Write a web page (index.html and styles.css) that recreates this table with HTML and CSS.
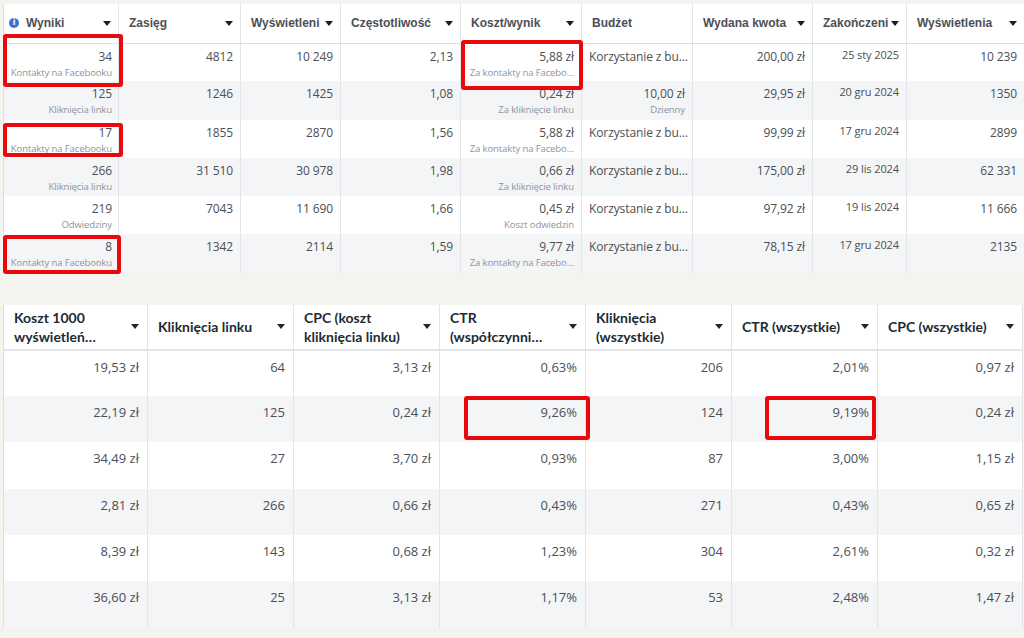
FILE: index.html
```html
<!DOCTYPE html>
<html lang="pl">
<head>
<meta charset="utf-8">
<title>Wyniki kampanii</title>
<link rel="stylesheet" href="styles.css">
</head>
<body>
<div class="page">
  <table class="grid top">
    <colgroup>
      <col class="t1"><col class="t2"><col class="t3"><col class="t4"><col class="t5"><col class="t6"><col class="t7"><col class="t8"><col class="t9">
    </colgroup>
    <thead>
      <tr>
        <th><div class="hd"><span class="info">i</span><span class="lbl">Wyniki</span><span class="caret"></span></div></th>
        <th><div class="hd"><span class="lbl">Zasięg</span><span class="caret"></span></div></th>
        <th><div class="hd"><span class="lbl">Wyświetleni</span><span class="caret"></span></div></th>
        <th><div class="hd"><span class="lbl">Częstotliwość</span><span class="caret"></span></div></th>
        <th><div class="hd"><span class="lbl">Koszt/wynik</span><span class="caret"></span></div></th>
        <th><div class="hd"><span class="lbl">Budżet</span></div></th>
        <th><div class="hd"><span class="lbl">Wydana kwota</span><span class="caret"></span></div></th>
        <th><div class="hd"><span class="lbl">Zakończeni</span><span class="caret"></span></div></th>
        <th><div class="hd"><span class="lbl">Wyświetlenia</span><span class="caret"></span></div></th>
      </tr>
    </thead>
    <tbody>
      <tr>
        <td class="num first mk"><div class="v">34</div><div class="sub">Kontakty na Facebooku</div><span class="mark m1"></span></td>
        <td class="num"><div class="v">4812</div></td>
        <td class="num"><div class="v">10 249</div></td>
        <td class="num"><div class="v">2,13</div></td>
        <td class="num mk"><div class="v">5,88 zł</div><div class="sub">Za kontakty na Facebo…</div><span class="mark m4"></span></td>
        <td class="txt"><div class="v">Korzystanie z bu…</div></td>
        <td class="num"><div class="v">200,00 zł</div></td>
        <td class="date"><div class="v">25 sty 2025</div></td>
        <td class="num"><div class="v">10 239</div></td>
      </tr>
      <tr>
        <td class="num first"><div class="v">125</div><div class="sub">Kliknięcia linku</div></td>
        <td class="num"><div class="v">1246</div></td>
        <td class="num"><div class="v">1425</div></td>
        <td class="num"><div class="v">1,08</div></td>
        <td class="num"><div class="v">0,24 zł</div><div class="sub">Za kliknięcie linku</div></td>
        <td class="num"><div class="v">10,00 zł</div><div class="sub">Dzienny</div></td>
        <td class="num"><div class="v">29,95 zł</div></td>
        <td class="date"><div class="v">20 gru 2024</div></td>
        <td class="num"><div class="v">1350</div></td>
      </tr>
      <tr>
        <td class="num first mk"><div class="v">17</div><div class="sub">Kontakty na Facebooku</div><span class="mark m2"></span></td>
        <td class="num"><div class="v">1855</div></td>
        <td class="num"><div class="v">2870</div></td>
        <td class="num"><div class="v">1,56</div></td>
        <td class="num"><div class="v">5,88 zł</div><div class="sub">Za kontakty na Facebo…</div></td>
        <td class="txt"><div class="v">Korzystanie z bu…</div></td>
        <td class="num"><div class="v">99,99 zł</div></td>
        <td class="date"><div class="v">17 gru 2024</div></td>
        <td class="num"><div class="v">2899</div></td>
      </tr>
      <tr>
        <td class="num first"><div class="v">266</div><div class="sub">Kliknięcia linku</div></td>
        <td class="num"><div class="v">31 510</div></td>
        <td class="num"><div class="v">30 978</div></td>
        <td class="num"><div class="v">1,98</div></td>
        <td class="num"><div class="v">0,66 zł</div><div class="sub">Za kliknięcie linku</div></td>
        <td class="txt"><div class="v">Korzystanie z bu…</div></td>
        <td class="num"><div class="v">175,00 zł</div></td>
        <td class="date"><div class="v">29 lis 2024</div></td>
        <td class="num"><div class="v">62 331</div></td>
      </tr>
      <tr>
        <td class="num first"><div class="v">219</div><div class="sub">Odwiedziny</div></td>
        <td class="num"><div class="v">7043</div></td>
        <td class="num"><div class="v">11 690</div></td>
        <td class="num"><div class="v">1,66</div></td>
        <td class="num"><div class="v">0,45 zł</div><div class="sub">Koszt odwiedzin</div></td>
        <td class="txt"><div class="v">Korzystanie z bu…</div></td>
        <td class="num"><div class="v">97,92 zł</div></td>
        <td class="date"><div class="v">19 lis 2024</div></td>
        <td class="num"><div class="v">11 666</div></td>
      </tr>
      <tr>
        <td class="num first mk"><div class="v">8</div><div class="sub">Kontakty na Facebooku</div><span class="mark m3"></span></td>
        <td class="num"><div class="v">1342</div></td>
        <td class="num"><div class="v">2114</div></td>
        <td class="num"><div class="v">1,59</div></td>
        <td class="num"><div class="v">9,77 zł</div><div class="sub">Za kontakty na Facebo…</div></td>
        <td class="txt"><div class="v">Korzystanie z bu…</div></td>
        <td class="num"><div class="v">78,15 zł</div></td>
        <td class="date"><div class="v">17 gru 2024</div></td>
        <td class="num"><div class="v">2135</div></td>
      </tr>
    </tbody>
  </table>

  <table class="grid bottom">
    <colgroup>
      <col class="b1"><col class="b2"><col class="b3"><col class="b4"><col class="b5"><col class="b6"><col class="b7">
    </colgroup>
    <thead>
      <tr>
        <th><div class="hd"><span class="lbl">Koszt 1000<br>wyświetleń…</span><span class="caret"></span></div></th>
        <th><div class="hd"><span class="lbl">Kliknięcia linku</span><span class="caret"></span></div></th>
        <th><div class="hd"><span class="lbl">CPC (koszt<br>kliknięcia linku)</span><span class="caret"></span></div></th>
        <th><div class="hd"><span class="lbl">CTR<br>(współczynni…</span><span class="caret"></span></div></th>
        <th><div class="hd"><span class="lbl">Kliknięcia<br>(wszystkie)</span><span class="caret"></span></div></th>
        <th><div class="hd"><span class="lbl">CTR (wszystkie)</span><span class="caret"></span></div></th>
        <th><div class="hd"><span class="lbl">CPC (wszystkie)</span><span class="caret"></span></div></th>
      </tr>
    </thead>
    <tbody>
      <tr><td>19,53 zł</td><td>64</td><td>3,13 zł</td><td>0,63%</td><td>206</td><td>2,01%</td><td>0,97 zł</td></tr>
      <tr><td>22,19 zł</td><td>125</td><td>0,24 zł</td><td class="mk">9,26%<span class="mark m5"></span></td><td>124</td><td class="mk">9,19%<span class="mark m6"></span></td><td>0,24 zł</td></tr>
      <tr><td>34,49 zł</td><td>27</td><td>3,70 zł</td><td>0,93%</td><td>87</td><td>3,00%</td><td>1,15 zł</td></tr>
      <tr><td>2,81 zł</td><td>266</td><td>0,66 zł</td><td>0,43%</td><td>271</td><td>0,43%</td><td>0,65 zł</td></tr>
      <tr><td>8,39 zł</td><td>143</td><td>0,68 zł</td><td>1,23%</td><td>304</td><td>2,61%</td><td>0,32 zł</td></tr>
      <tr><td>36,60 zł</td><td>25</td><td>3,13 zł</td><td>1,17%</td><td>53</td><td>2,48%</td><td>1,47 zł</td></tr>
    </tbody>
  </table>
</div>
</body>
</html>
```

FILE: styles.css
```css
* { box-sizing: border-box; }

html, body {
  margin: 0;
  padding: 0;
  background: #f4f4ef;
  width: 1024px;
  height: 638px;
  overflow: hidden;
}

.page {
  padding: 4px 0 0 3px;
  display: flex;
  flex-direction: column;
  gap: 32px;
}

.grid {
  border-collapse: collapse;
  table-layout: fixed;
  background: #fff;
  border-left: 1px solid #dcdee2;
}

.grid th,
.grid td {
  padding: 0;
  border-right: 1px solid #e2e4e7;
  vertical-align: top;
}

.grid tbody tr:nth-child(even) td { background: #f4f5f7; }

.hd {
  display: flex;
  align-items: center;
  height: 100%;
}

.lbl {
  flex: 1;
  min-width: 0;
  white-space: nowrap;
  text-align: left;
}

.caret {
  flex: none;
  width: 0;
  height: 0;
  border-left: 4px solid transparent;
  border-right: 4px solid transparent;
  border-top: 5px solid #1c1e21;
  margin-left: 4px;
}

.mk { position: relative; }

.mark {
  position: absolute;
  z-index: 5;
  border: 4px solid #e8090d;
  border-radius: 3px;
  pointer-events: none;
}

/* ---------- top table ---------- */
.top { width: 1021px; }
.top .t1 { width: 115px; }
.top .t2 { width: 122px; }
.top .t3 { width: 100px; }
.top .t4 { width: 120px; }
.top .t5 { width: 121px; }
.top .t6 { width: 111px; }
.top .t7 { width: 120px; }
.top .t8 { width: 94px; }
.top .t9 { width: 118px; }

.top th {
  height: 39px;
  border-bottom: 1px solid #dcdee2;
  font-family: "Liberation Sans", Arial, sans-serif;
  font-weight: bold;
  font-size: 12px;
  color: #4b4f56;
}
.top .hd { padding: 0 7px 0 10px; height: 38px; }
.top th:first-child .hd { padding-left: 5px; }

.info {
  flex: none;
  width: 10px;
  height: 10px;
  border-radius: 50%;
  background: #3b6fd6;
  color: #fff;
  font-size: 8px;
  line-height: 10px;
  text-align: center;
  font-family: "DejaVu Sans", sans-serif;
  font-weight: bold;
  margin-right: 7px;
}

.top td {
  height: 38.3px;
  font-family: "Open Sans", "Noto Sans", sans-serif;
  color: #4b4f56;
  padding: 4px 7px 0 6px;
  letter-spacing: -0.1px;
}
.top td.num { text-align: right; }
.top td.first { padding: 4px 6px 0 2px; }
.top .v {
  font-size: 12px;
  line-height: 17px;
  white-space: nowrap;
}
.top .sub {
  font-size: 9.6px;
  line-height: 15px;
  color: #90949c;
  white-space: nowrap;
  letter-spacing: -0.15px;
}
.top td.txt { text-align: left; padding-left: 7px; }
.top td.date { text-align: right; padding-top: 2px; padding-right: 7px; }
.top td.date .v { font-size: 11px; }

.m1 { top: -10px; left: -1px; right: -5px; bottom: -6px; }
.m2 { top: 3px; left: -1px; right: -5px; bottom: 1px; }
.m3 { top: 1px; left: -1px; right: -3px; bottom: -1px; }
.m4 { top: -4px; left: 0; right: -2px; bottom: -9px; }

/* ---------- bottom table ---------- */
.bottom { width: 1019px; }
.bottom .b1 { width: 144px; }
.bottom .b2 { width: 146px; }
.bottom .b3 { width: 146px; }
.bottom .b4 { width: 146px; }
.bottom .b5 { width: 146px; }
.bottom .b6 { width: 146px; }
.bottom .b7 { width: 145px; }

.bottom th {
  height: 45px;
  border-bottom: 2px solid #e2e4e7;
  font-family: Lato, "Noto Sans", sans-serif;
  font-weight: bold;
  font-size: 14px;
  line-height: 19px;
  color: #1c2b33;
}
.bottom .hd { padding: 0 8px 0 10px; height: 44px; }
.bottom .caret { border-top-color: #1c2b33; }

.bottom td {
  height: 46.3px;
  text-align: right;
  padding: 7px 8px 0 8px;
  font-family: "Open Sans", "Noto Sans", sans-serif;
  font-size: 13px;
  line-height: 18px;
  color: #4b4f56;
}

.m5 { top: 0; left: 24px; right: -5px; bottom: 2px; }
.m6 { top: 0; left: 33px; right: 1px; bottom: 2px; }
```
